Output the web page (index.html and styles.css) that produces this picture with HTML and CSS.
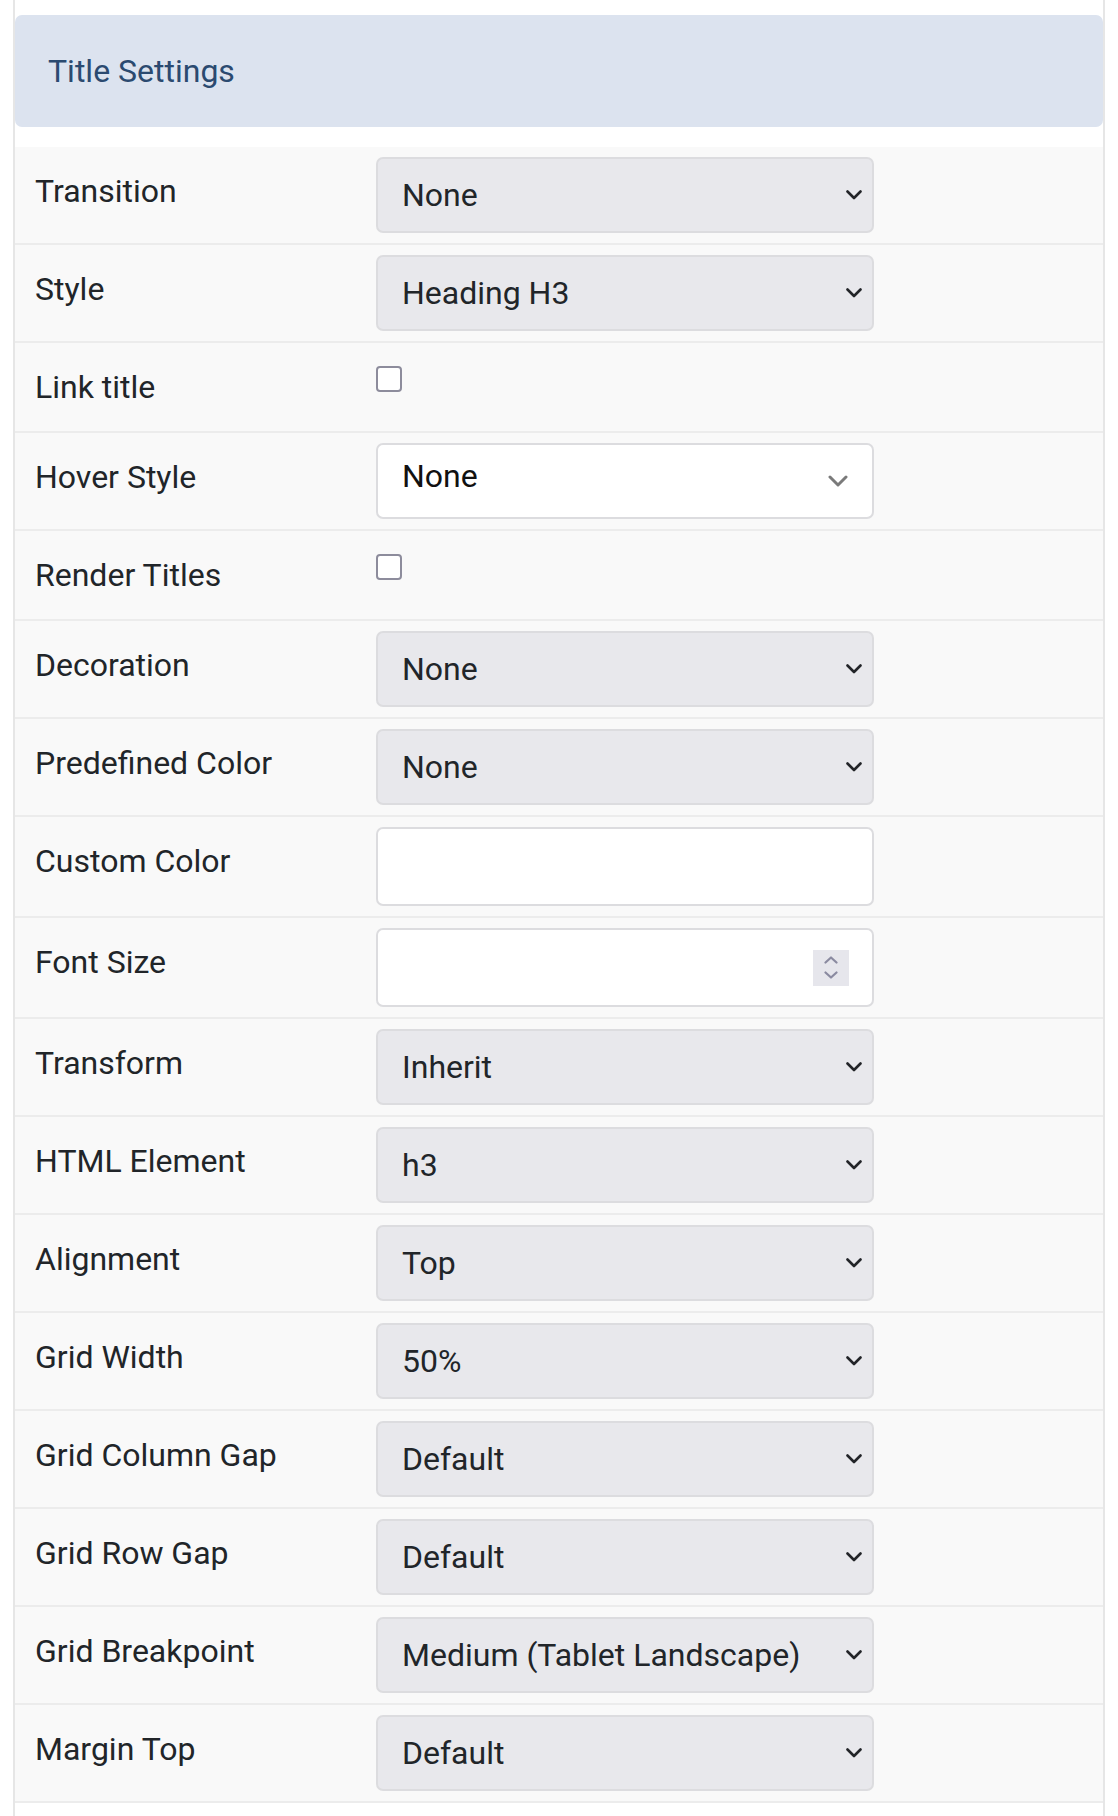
FILE: index.html
```
<html>
<head>
    <link rel="stylesheet" href="styles.css">
</head>
<body>
    <div class="panel">
        <div class="panel-header">Title Settings</div>

        <div class="settings">
            <div class="row">
                <label class="row-label">Transition</label>
                <div class="row-control">
                    <div class="select"><span>None</span><svg class="chevron" viewBox="0 0 16 10"><path d="M1.5 1.5 L8 8 L14.5 1.5"/></svg></div>
                </div>
            </div>
            <div class="row">
                <label class="row-label">Style</label>
                <div class="row-control">
                    <div class="select"><span>Heading H3</span><svg class="chevron" viewBox="0 0 16 10"><path d="M1.5 1.5 L8 8 L14.5 1.5"/></svg></div>
                </div>
            </div>
            <div class="row">
                <label class="row-label">Link title</label>
                <div class="row-control">
                    <input type="checkbox" class="checkbox">
                </div>
            </div>
            <div class="row">
                <label class="row-label">Hover Style</label>
                <div class="row-control">
                    <div class="select select-plain"><span>None</span><svg class="chevron-plain" viewBox="0 0 20 12"><path d="M2 2 L10 10 L18 2"/></svg></div>
                </div>
            </div>
            <div class="row">
                <label class="row-label">Render Titles</label>
                <div class="row-control">
                    <input type="checkbox" class="checkbox">
                </div>
            </div>
            <div class="row">
                <label class="row-label">Decoration</label>
                <div class="row-control">
                    <div class="select"><span>None</span><svg class="chevron" viewBox="0 0 16 10"><path d="M1.5 1.5 L8 8 L14.5 1.5"/></svg></div>
                </div>
            </div>
            <div class="row">
                <label class="row-label">Predefined Color</label>
                <div class="row-control">
                    <div class="select"><span>None</span><svg class="chevron" viewBox="0 0 16 10"><path d="M1.5 1.5 L8 8 L14.5 1.5"/></svg></div>
                </div>
            </div>
            <div class="row">
                <label class="row-label">Custom Color</label>
                <div class="row-control">
                    <div class="text-input"></div>
                </div>
            </div>
            <div class="row">
                <label class="row-label">Font Size</label>
                <div class="row-control">
                    <div class="text-input number-input">
                        <div class="spinner">
                            <svg viewBox="0 0 14 8"><path d="M1.5 6.5 L7 1.5 L12.5 6.5"/></svg>
                            <svg viewBox="0 0 14 8"><path d="M1.5 1.5 L7 6.5 L12.5 1.5"/></svg>
                        </div>
                    </div>
                </div>
            </div>
            <div class="row">
                <label class="row-label">Transform</label>
                <div class="row-control">
                    <div class="select"><span>Inherit</span><svg class="chevron" viewBox="0 0 16 10"><path d="M1.5 1.5 L8 8 L14.5 1.5"/></svg></div>
                </div>
            </div>
            <div class="row">
                <label class="row-label">HTML Element</label>
                <div class="row-control">
                    <div class="select"><span>h3</span><svg class="chevron" viewBox="0 0 16 10"><path d="M1.5 1.5 L8 8 L14.5 1.5"/></svg></div>
                </div>
            </div>
            <div class="row">
                <label class="row-label">Alignment</label>
                <div class="row-control">
                    <div class="select"><span>Top</span><svg class="chevron" viewBox="0 0 16 10"><path d="M1.5 1.5 L8 8 L14.5 1.5"/></svg></div>
                </div>
            </div>
            <div class="row">
                <label class="row-label">Grid Width</label>
                <div class="row-control">
                    <div class="select"><span>50%</span><svg class="chevron" viewBox="0 0 16 10"><path d="M1.5 1.5 L8 8 L14.5 1.5"/></svg></div>
                </div>
            </div>
            <div class="row">
                <label class="row-label">Grid Column Gap</label>
                <div class="row-control">
                    <div class="select"><span>Default</span><svg class="chevron" viewBox="0 0 16 10"><path d="M1.5 1.5 L8 8 L14.5 1.5"/></svg></div>
                </div>
            </div>
            <div class="row">
                <label class="row-label">Grid Row Gap</label>
                <div class="row-control">
                    <div class="select"><span>Default</span><svg class="chevron" viewBox="0 0 16 10"><path d="M1.5 1.5 L8 8 L14.5 1.5"/></svg></div>
                </div>
            </div>
            <div class="row">
                <label class="row-label">Grid Breakpoint</label>
                <div class="row-control">
                    <div class="select"><span>Medium (Tablet Landscape)</span><svg class="chevron" viewBox="0 0 16 10"><path d="M1.5 1.5 L8 8 L14.5 1.5"/></svg></div>
                </div>
            </div>
            <div class="row">
                <label class="row-label">Margin Top</label>
                <div class="row-control">
                    <div class="select"><span>Default</span><svg class="chevron" viewBox="0 0 16 10"><path d="M1.5 1.5 L8 8 L14.5 1.5"/></svg></div>
                </div>
            </div>
        </div>
    </div>
</body>
</html>
```
FILE: styles.css
```
body {
    margin: 0;
    background: #ffffff;
    font-family: Roboto, 'Noto Sans', sans-serif;
    color: #212529;
}

.panel {
    margin: 0 13px;
    min-height: 1816px;
    padding-top: 15px;
    border-left: 2px solid #e6e6e6;
    border-right: 2px solid #e6e6e6;
    box-sizing: border-box;
}

.panel-header {
    height: 112px;
    display: flex;
    align-items: center;
    padding-left: 33px;
    background: #dce3ef;
    border-radius: 7px;
    color: #2b4a70;
    font-size: 32px;
}

.settings {
    margin-top: 20px;
}

.row {
    display: grid;
    grid-template-columns: 361px 498px;
    background: #f9f9f9;
    border-bottom: 2px solid #ececec;
}

.row-label {
    padding: 21px 20px;
    font-size: 32px;
    line-height: 46px;
    color: #212529;
}

.row-control {
    padding: 10px 0;
}

.select {
    height: 76px;
    box-sizing: border-box;
    display: flex;
    align-items: center;
    justify-content: space-between;
    padding: 0 10px 0 24px;
    background: #e8e8ec;
    border: 2px solid #dcdcdf;
    border-radius: 7px;
    font-size: 32px;
    color: #212529;
}

.chevron {
    width: 16px;
    height: 10px;
    fill: none;
    stroke: #222428;
    stroke-width: 2.6;
    stroke-linecap: round;
    stroke-linejoin: round;
}

.select-plain {
    background: #ffffff;
    color: #111111;
    padding-right: 24px;
    padding-bottom: 10px;
}

.chevron-plain {
    width: 20px;
    height: 12px;
    margin-top: 10px;
    fill: none;
    stroke: #7a7a7a;
    stroke-width: 3;
    stroke-linecap: round;
    stroke-linejoin: round;
}

.checkbox {
    appearance: none;
    display: block;
    width: 26px;
    height: 26px;
    margin: 13px 0 0 0;
    background: #ffffff;
    border: 2px solid #8d8c9c;
    border-radius: 4px;
    box-sizing: border-box;
}

.text-input {
    height: 79px;
    box-sizing: border-box;
    background: #ffffff;
    border: 2px solid #dcdcdf;
    border-radius: 7px;
}

.number-input {
    display: flex;
    align-items: center;
    justify-content: flex-end;
    padding-right: 23px;
}

.spinner {
    width: 36px;
    height: 36px;
    display: flex;
    flex-direction: column;
    align-items: center;
    justify-content: center;
    gap: 7px;
    background: #e6e6ec;
}

.spinner svg {
    width: 14px;
    height: 8px;
    fill: none;
    stroke: #8a8aa0;
    stroke-width: 2.2;
    stroke-linecap: round;
    stroke-linejoin: round;
}
```
